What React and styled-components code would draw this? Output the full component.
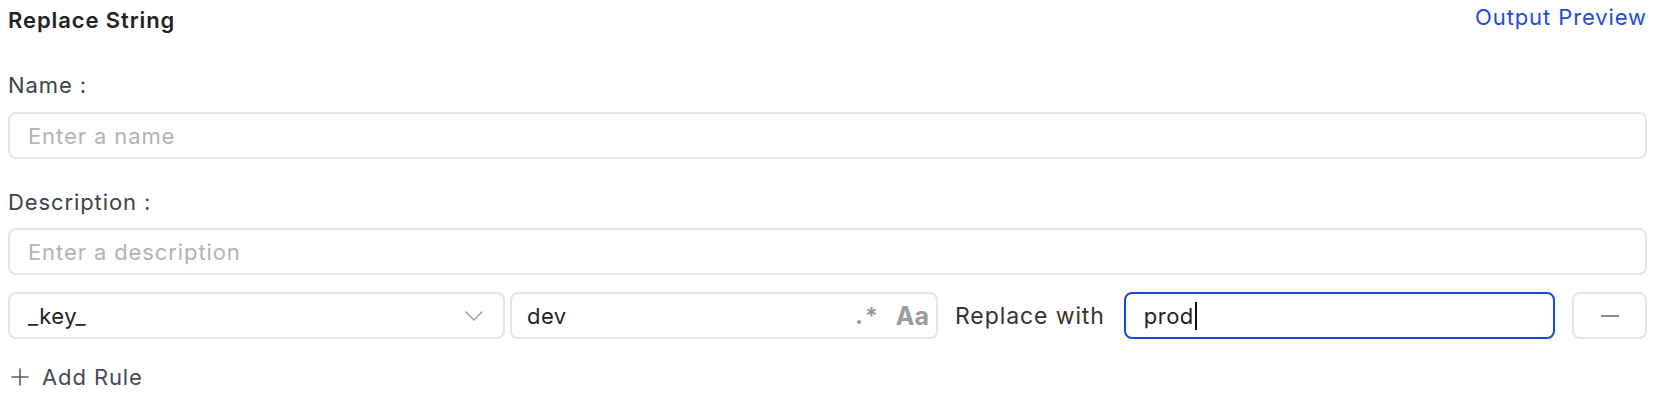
import React from 'react';
import styled, { createGlobalStyle } from 'styled-components';

const GlobalStyle = createGlobalStyle`
  body {
    margin: 0;
    background: #ffffff;
    font-family: Inter, "Noto Sans", "Liberation Sans", sans-serif;
  }
`;

const Page = styled.div`
  width: 1639px;
  padding: 6px 0 0 8px;
  display: flex;
  flex-direction: column;
`;

const Header = styled.div`
  display: flex;
  justify-content: space-between;
  align-items: flex-start;
`;

const Title = styled.h2`
  margin: 0;
  font-size: 22px;
  line-height: 28px;
  font-weight: 600;
  letter-spacing: 0.9px;
  color: #222326;
`;

const PreviewLink = styled.a`
  margin-top: -3px;
  font-size: 22px;
  line-height: 28px;
  letter-spacing: 0.9px;
  color: #1d4ed8;
  text-decoration: none;
  cursor: pointer;
`;

const FieldLabel = styled.label`
  margin-top: ${(p) => p.$top}px;
  font-size: 22px;
  line-height: 28px;
  letter-spacing: 0.9px;
  color: #3d424d;
`;

const Box = styled.div`
  box-sizing: border-box;
  height: 47px;
  display: flex;
  align-items: center;
  padding: 0 18px;
  border: 2px solid ${(p) => (p.$focused ? '#1d45d6' : '#e5e5e5')};
  border-radius: 8px;
  background: #fff;
  font-size: 22px;
  letter-spacing: ${(p) => (p.$placeholder ? 0.9 : 0.5)}px;
  color: ${(p) => (p.$placeholder ? '#b3b3b3' : '#222')};
`;

const TextBox = styled(Box)`
  margin-top: ${(p) => p.$top}px;
`;

const RuleRow = styled.div`
  margin-top: 17px;
  display: flex;
  align-items: center;
`;

const SelectBox = styled(Box)`
  flex: 0 0 497px;
  justify-content: space-between;
  padding-right: 20px;
  margin-right: 5px;
`;

const MatchBox = styled(Box)`
  flex: 0 0 428px;
  padding-left: 15px;
  padding-right: 7px;
`;

const MatchText = styled.span`
  flex: 1;
`;

const Flag = styled.span`
  font-weight: 700;
  color: #9b9b9b;
  font-size: ${(p) => p.$size}px;
  margin-left: ${(p) => p.$gap || 0}px;
  letter-spacing: ${(p) => p.$spacing || 0}px;
`;

const ReplaceLabel = styled.span`
  margin: 0 19px 0 17px;
  font-size: 23px;
  letter-spacing: 0.9px;
  color: #333;
  white-space: nowrap;
`;

const ReplaceBox = styled(Box)`
  flex: 1;
`;

const Caret = styled.span`
  display: inline-block;
  width: 2px;
  height: 28px;
  background: #111;
  margin-left: 1px;
`;

const RemoveButton = styled.button`
  box-sizing: border-box;
  flex: 0 0 75px;
  height: 47px;
  margin-left: 17px;
  border: 2px solid #e5e5e5;
  border-radius: 8px;
  background: #fff;
  display: flex;
  align-items: center;
  justify-content: center;
  cursor: pointer;
`;

const MinusBar = styled.span`
  width: 18px;
  height: 2px;
  background: #8a8a8a;
`;

const AddRule = styled.button`
  margin-top: 24px;
  align-self: flex-start;
  display: flex;
  align-items: center;
  gap: 13px;
  padding: 0 0 0 3px;
  border: none;
  background: none;
  font-family: inherit;
  font-size: 22px;
  line-height: 28px;
  letter-spacing: 0.9px;
  color: #454a55;
  cursor: pointer;
`;

const Chevron = () => (
  <svg width="18" height="10" viewBox="0 0 18 10" fill="none">
    <path d="M1 1l8 8 8-8" stroke="#9a9a9a" strokeWidth="1.4" strokeLinecap="round" strokeLinejoin="round" />
  </svg>
);

const Plus = () => (
  <svg width="18" height="18" viewBox="0 0 18 18" fill="none">
    <path d="M9 1v16M1 9h16" stroke="#5a5e66" strokeWidth="1.6" strokeLinecap="round" />
  </svg>
);

export default function App() {
  return (
    <>
      <GlobalStyle />
      <Page>
        <Header>
          <Title>Replace String</Title>
          <PreviewLink>Output Preview</PreviewLink>
        </Header>

        <FieldLabel $top={37}>Name :</FieldLabel>
        <TextBox $top={13} $placeholder>Enter a name</TextBox>

        <FieldLabel $top={29}>Description :</FieldLabel>
        <TextBox $top={12} $placeholder>Enter a description</TextBox>

        <RuleRow>
          <SelectBox>
            <span>_key_</span>
            <Chevron />
          </SelectBox>
          <MatchBox>
            <MatchText>dev</MatchText>
            <Flag $size={23} $spacing={2}>.*</Flag>
            <Flag $size={25} $gap={16}>Aa</Flag>
          </MatchBox>
          <ReplaceLabel>Replace with</ReplaceLabel>
          <ReplaceBox $focused>
            prod
            <Caret />
          </ReplaceBox>
          <RemoveButton>
            <MinusBar />
          </RemoveButton>
        </RuleRow>

        <AddRule>
          <Plus />
          Add Rule
        </AddRule>
      </Page>
    </>
  );
}
